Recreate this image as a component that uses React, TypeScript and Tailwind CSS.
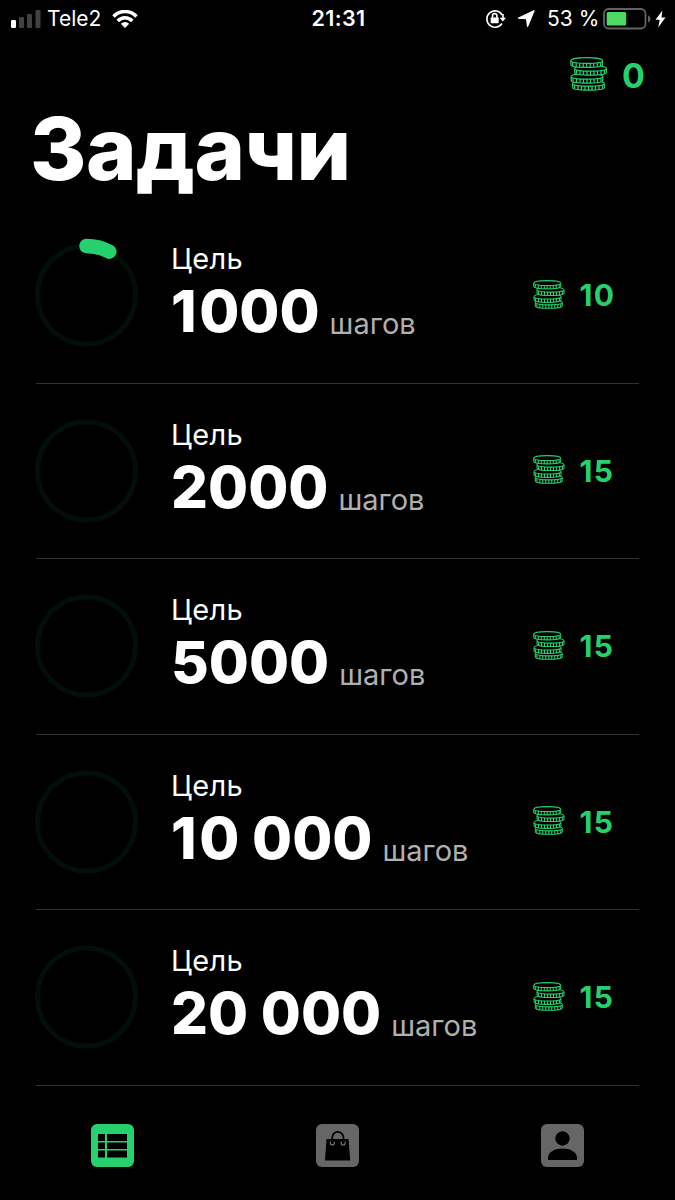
type Goal = { steps: string; reward: number; progress: number };

const goals: Goal[] = [
  { steps: '1000', reward: 10, progress: 0.077 },
  { steps: '2000', reward: 15, progress: 0 },
  { steps: '5000', reward: 15, progress: 0 },
  { steps: '10 000', reward: 15, progress: 0 },
  { steps: '20 000', reward: 15, progress: 0 },
];

const layers = [
  { x: 2, y: 26.5 },
  { x: 0.5, y: 19.5 },
  { x: 4, y: 11.5 },
  { x: 0.2, y: 3.7 },
];
const ridges = [2.5, 6, 9.5, 13, 16.5, 20, 23.5, 27, 30.5];

function Coins({ className }: { className: string }) {
  return (
    <svg viewBox="0 0 37.5 34" className={className} fill="#000" stroke="#25d16d" strokeWidth="1.25">
      {layers.map(({ x, y }) => (
        <g key={y} transform={`translate(${x} ${y})`}>
          <path d="M.7 0C.7-4 32.3-4 32.3 0V4C32.3 7.6.7 7.6.7 4Z" />
          <path d="M.7 0C.7 3.6 32.3 3.6 32.3 0" />
          {ridges.map((r) => {
            const k = Math.sqrt(1 - ((r - 16.5) / 16) ** 2) * 2.6;
            return <path key={r} d={`M${r} ${k}V${k + 4}`} />;
          })}
        </g>
      ))}
    </svg>
  );
}

function Ring({ progress }: { progress: number }) {
  const length = 2 * Math.PI * 49;
  return (
    <svg viewBox="0 0 116 116" className="-ml-[8px] size-[116px] shrink-0" fill="none">
      <circle cx="58.5" cy="58" r="49" stroke="#020f09" strokeWidth="5" />
      {progress > 0 && (
        <circle
          cx="58.5" cy="58" r="49" stroke="#25d16d" strokeWidth="14.5" strokeLinecap="round"
          strokeDasharray={`${length * progress} ${length}`} transform="rotate(-90 58.5 58)"
        />
      )}
    </svg>
  );
}

function StatusBar() {
  return (
    <div className="grid h-[37px] grid-cols-3 items-center pr-[9px] pl-[11px] text-[21px] leading-none">
      <div className="flex items-center">
        <svg viewBox="0 0 30 18" className="h-[18px] w-[30px]" fill="#404040">
          <rect y="10" width="5" height="8" rx="1.2" fill="#fff" />
          <rect x="8" y="7" width="5" height="11" rx="1.2" />
          <rect x="16" y="4" width="5" height="14" rx="1.2" />
          <rect x="24.5" width="5" height="18" rx="1.2" />
        </svg>
        <span className="ml-[6px] w-[55px] whitespace-nowrap">Tele2</span>
        <svg viewBox="0 0 26 18" className="ml-[10px] h-[18px] w-[26px]" fill="none" stroke="#fff" strokeWidth="3.5">
          <path d="M1.5 6.5C8-.2 18-.2 24.5 6.5" />
          <path d="M5.7 11C10 6.8 16 6.8 20.3 11" />
          <path d="M13 18L8.8 13.8Q13 10.4 17.2 13.8Z" fill="#fff" stroke="none" />
        </svg>
      </div>
      <div className="text-center text-[21.5px] font-semibold tracking-[0.4px]">21:31</div>
      <div className="flex items-center justify-end">
        <svg viewBox="0 0 22 20" className="h-[20px] w-[22px] shrink-0" fill="none" stroke="#fff" strokeWidth="1.6">
          <path d="M17.2 6A8.2 8.2 0 1 0 17 14.5" />
          <path d="M18 5V9" />
          <path d="M14.5 8.7H21L17.8 12.4Z" fill="#fff" stroke="none" />
          <rect x="5.7" y="8.5" width="8" height="5.7" rx=".7" fill="#fff" stroke="none" />
          <path d="M7.5 9V6.8a2.2 2.2 0 0 1 4.4 0V9" />
        </svg>
        <svg viewBox="0 0 17 17" className="ml-[11px] size-[17px] shrink-0" fill="#fff">
          <path d="M16 .8 9.6 16.3 8.6 8.7.6 8.2Z" stroke="#fff" strokeWidth="1.3" strokeLinejoin="round" />
        </svg>
        <span className="ml-[12px] w-[53px] whitespace-nowrap">53 %</span>
        <svg viewBox="0 0 48 22" className="ml-[3px] h-[22px] w-[48px] shrink-0">
          <rect x="1" y="1" width="41.5" height="19.5" rx="4.5" fill="none" stroke="#626262" strokeWidth="1.8" />
          <rect x="3.7" y="4" width="19.5" height="13.6" rx="1.5" fill="#4cd964" />
          <path d="M45 7.2Q47.5 8.2 47.5 10.8T45 14.4Z" fill="#626262" />
        </svg>
        <svg viewBox="0 0 11 18" className="ml-[4px] h-[18px] w-[11px] shrink-0" fill="#fff">
          <path d="M7.5 .5.5 9.8H4.7L3.2 17.5 10.5 7.5H6.4Z" />
        </svg>
      </div>
    </div>
  );
}

function GoalRow({ steps, reward, progress }: Goal) {
  const lead = steps[0] === '1' ? 'tracking-[2.6px]' : '';
  return (
    <li className="flex h-[175.5px] items-center border-b border-[#333]">
      <Ring progress={progress} />
      <div className="ml-[27px] grow pb-[7px]">
        <div className="h-[31px] text-[29px] leading-[30px] tracking-[0.3px]">Цель</div>
        <div className="flex h-[64px] items-baseline gap-[10px] whitespace-nowrap">
          <span className="text-[58px] leading-[72px] font-extrabold">
            <span className={lead}>{steps[0]}</span>
            {steps.slice(1)}
          </span>
          <span className="relative top-[2px] text-[29px] text-[#b0b0b0]">шагов</span>
        </div>
      </div>
      <div className="flex w-[106px] shrink-0 items-center">
        <Coins className="relative -top-px h-[29px] w-[32px]" />
        <span className="ml-[14.5px] text-[30px] leading-none font-bold tracking-[1.2px] text-[#25d16d]">{reward}</span>
      </div>
    </li>
  );
}

export default function App() {
  return (
    <div className="flex h-[1200px] w-[675px] flex-col overflow-hidden bg-black font-['Inter',sans-serif] text-white">
      <StatusBar />
      <div className="flex h-[74px] items-center justify-end pr-[30px]">
        <Coins className="h-[34px] w-[37.5px]" />
        <span className="relative top-[2px] ml-[15px] text-[34px] leading-none font-bold text-[#25d16d]">0</span>
      </div>
      <h1 className="h-[97px] pl-[30px] text-[86px] leading-[77px] font-extrabold tracking-[-0.5px]">Задачи</h1>
      <ul className="px-[36px]">
        {goals.map((goal) => (
          <GoalRow key={goal.steps} {...goal} />
        ))}
      </ul>
      <nav className="mt-[38.5px] grid grid-cols-3 justify-items-center">
        <svg viewBox="0 0 43 43" className="size-[43px]">
          <rect width="43" height="43" rx="6" fill="#25d16d" />
          <path d="M7 10H14V17H7ZM16 10H36V17H16ZM7 18.5H14V25H7ZM16 18.5H36V25H16ZM7 26.5H14V33.5H7ZM16 26.5H36V33.5H16Z" />
        </svg>
        <svg viewBox="0 0 43 43" className="size-[43px]">
          <rect width="43" height="43" rx="6" fill="#666" />
          <path d="M10.5 15H32.5L34.2 36.5H9Z" />
          <path d="M16.2 16V13.5a5.6 5.6 0 0 1 11.2 0V16" fill="none" stroke="#000" strokeWidth="1.8" />
          <path d="M14.3 17.5V19a2 2 0 0 0 4 0V17.5M25.2 17.5V19a2 2 0 0 0 4 0V17.5" fill="none" stroke="#777" strokeWidth="1.1" />
        </svg>
        <svg viewBox="0 0 43 43" className="size-[43px]">
          <rect width="43" height="43" rx="6" fill="#666" />
          <circle cx="21.5" cy="14.5" r="7.2" />
          <path d="M7 36V34C7 21.3 36 21.3 36 34V36Z" />
        </svg>
      </nav>
    </div>
  );
}
